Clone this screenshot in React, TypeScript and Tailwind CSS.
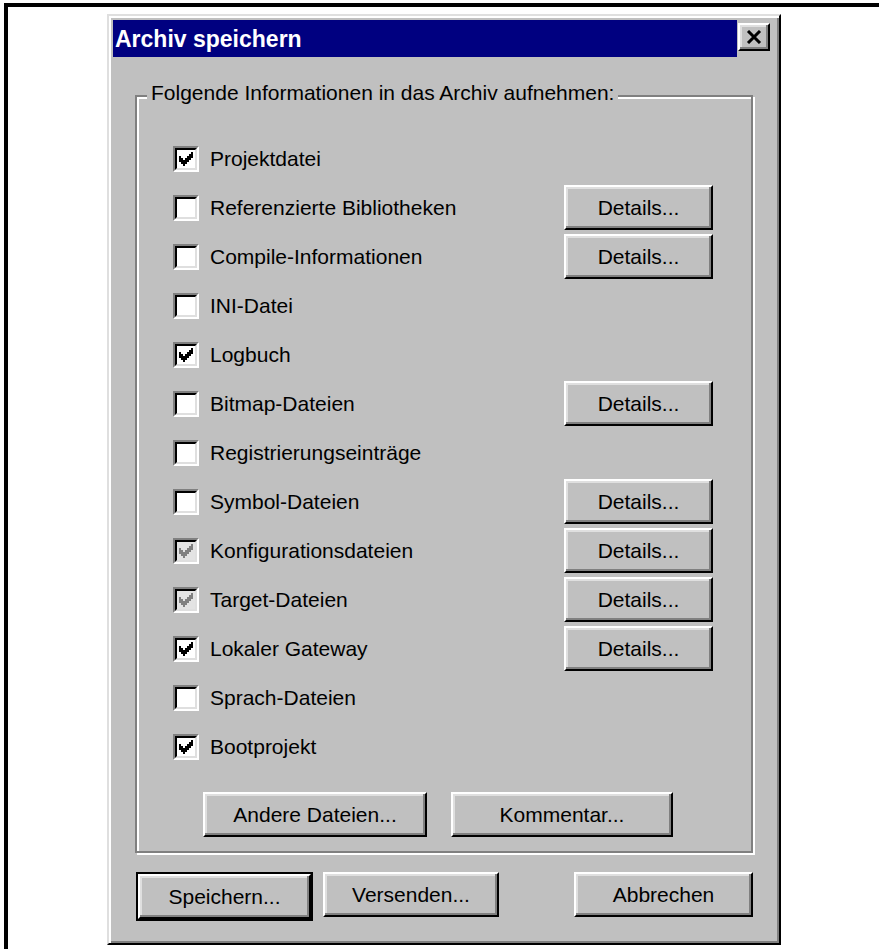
import type { ReactNode } from "react"

type Row = { label: string; state: "on" | "off" | "grayed"; details?: boolean }

const rows: Row[] = [
  { label: "Projektdatei", state: "on" },
  { label: "Referenzierte Bibliotheken", state: "off", details: true },
  { label: "Compile-Informationen", state: "off", details: true },
  { label: "INI-Datei", state: "off" },
  { label: "Logbuch", state: "on" },
  { label: "Bitmap-Dateien", state: "off", details: true },
  { label: "Registrierungseinträge", state: "off" },
  { label: "Symbol-Dateien", state: "off", details: true },
  { label: "Konfigurationsdateien", state: "grayed", details: true },
  { label: "Target-Dateien", state: "grayed", details: true },
  { label: "Lokaler Gateway", state: "on", details: true },
  { label: "Sprach-Dateien", state: "off" },
  { label: "Bootprojekt", state: "on" },
]

function CheckMark({ color }: { color: string }) {
  return (
    <svg width="14" height="14" viewBox="0 0 7 7" shapeRendering="crispEdges">
      <path
        fill={color}
        d="M6 0h1v1h-1z M5 1h2v1h-2z M0 2h1v1h-1z M4 2h3v1h-3z M0 3h2v1h-2z M3 3h3v1h-3z M0 4h5v1h-5z M1 5h3v1h-3z M2 6h1v1h-1z"
      />
    </svg>
  )
}

function CheckBox({ state }: { state: Row["state"] }) {
  return (
    <div className="w-[26px] h-[26px] shrink-0 border-2 border-t-[#808080] border-l-[#808080] border-r-white border-b-white">
      <div
        className={
          state === "grayed"
            ? "w-full h-full flex items-center justify-center border-2 border-t-black border-l-black border-r-[#dfdfdf] border-b-[#dfdfdf] bg-[#e3e3e3]"
            : "w-full h-full flex items-center justify-center border-2 border-t-black border-l-black border-r-[#dfdfdf] border-b-[#dfdfdf] bg-white"
        }
      >
        {state === "on" && <CheckMark color="#000" />}
        {state === "grayed" && <CheckMark color="#808080" />}
      </div>
    </div>
  )
}

function Button({ children, className }: { children: ReactNode; className: string }) {
  return (
    <div
      className={
        "h-[45px] flex items-center justify-center border-2 border-t-white border-l-white border-r-black border-b-black bg-[#c0c0c0] shadow-[inset_-2px_-2px_0_#808080,inset_2px_2px_0_#dfdfdf] text-black " +
        className
      }
    >
      {children}
    </div>
  )
}

export default function App() {
  return (
    <div className="min-h-screen bg-white font-['Liberation_Sans',Arial,sans-serif] text-[21px] leading-[24px]">
      <div className="mt-[3px] ml-[4px] h-[946px] border-t-4 border-l-4 border-black pt-[7px] pl-[99px]">
        {/* dialog window */}
        <div className="w-[674px] h-[931px] border-2 border-t-[#dfdfdf] border-l-[#dfdfdf] border-r-black border-b-black bg-[#c0c0c0] shadow-[inset_2px_2px_0_#fff,inset_-2px_-2px_0_#808080] p-[4px] flex flex-col">
          <div className="h-[37px] flex">
            <div className="flex-1 bg-[#000080] flex items-center pl-[2px] text-white font-bold text-[23px]">
              Archiv speichern
            </div>
            <div className="w-[38px] pl-[1px] pt-[3px]">
              <div className="w-[32px] h-[28px] flex items-center justify-center border-2 border-t-white border-l-white border-r-black border-b-black shadow-[inset_-2px_-2px_0_#808080,inset_2px_2px_0_#dfdfdf]">
                <svg width="16" height="14" viewBox="0 0 16 14">
                  <path d="M2 1L14 13M14 1L2 13" stroke="#000" strokeWidth="3" />
                </svg>
              </div>
            </div>
          </div>

          {/* group box */}
          <div className="relative mt-[38px] mx-[22px] h-[758px] border-2 border-[#808080] shadow-[2px_2px_0_#fff,inset_2px_2px_0_#fff] pt-[37px] pl-[36px] pr-[38px]">
            <span className="absolute -top-[16px] left-[10px] px-[4px] bg-[#c0c0c0] text-black">
              Folgende Informationen in das Archiv aufnehmen:
            </span>
            {rows.map((r) => (
              <div key={r.label} className="h-[49px] flex items-center">
                <CheckBox state={r.state} />
                <span className="ml-[11px] flex-1 text-black">{r.label}</span>
                {r.details && <Button className="w-[149px]">Details...</Button>}
              </div>
            ))}
            <div className="mt-[21px] ml-[30px] flex gap-[24px]">
              <Button className="w-[224px]">Andere Dateien...</Button>
              <Button className="w-[222px]">Kommentar...</Button>
            </div>
          </div>

          <div className="mt-[19px] mx-[22px] flex">
            <div className="ml-[1px] border-2 border-black">
              <Button className="w-[173px] h-[41px]">Speichern...</Button>
            </div>
            <Button className="ml-[10px] w-[176px]">Versenden...</Button>
            <Button className="ml-auto w-[179px]">Abbrechen</Button>
          </div>
        </div>
      </div>
    </div>
  )
}
